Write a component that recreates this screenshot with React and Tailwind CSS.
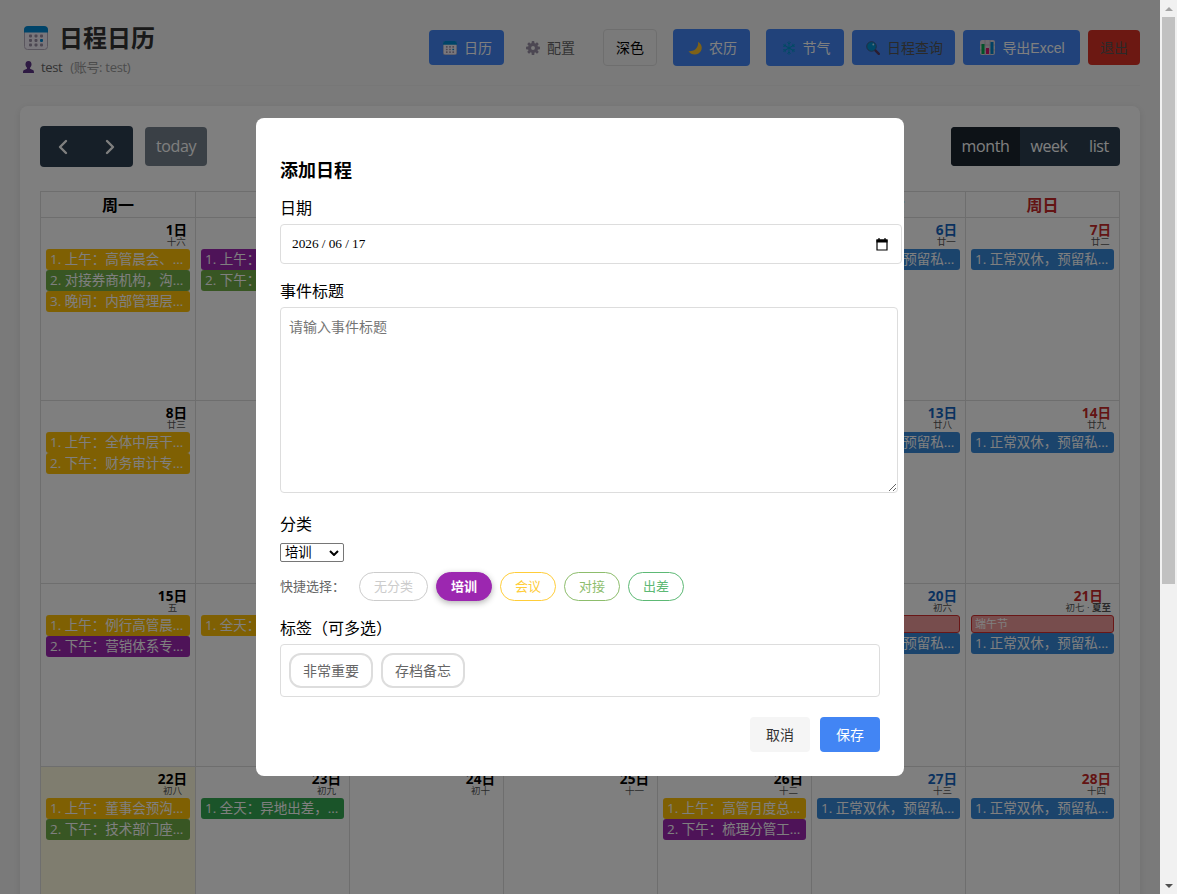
import { useState } from "react";
import { ChevronLeft, ChevronRight } from "lucide-react";

const eventColors = {
  amber: "bg-[#ffc107]",
  olive: "bg-[#70ad47]",
  green: "bg-[#34a853]",
  purple: "bg-[#9c27b0]",
  blue: "bg-[#3788d8]",
};

const restDay = { color: "blue", text: "1. 正常双休，预留私..." };

const weekDays = ["周一", "周二", "周三", "周四", "周五", "周六", "周日"];

const weeks = [
  [
    {
      day: 1,
      lunar: "十六",
      events: [
        { color: "amber", text: "1. 上午：高管晨会、..." },
        { color: "olive", text: "2. 对接券商机构，沟..." },
        { color: "amber", text: "3. 晚间：内部管理层..." },
      ],
    },
    {
      day: 2,
      lunar: "十七",
      events: [
        { color: "purple", text: "1. 上午：" },
        { color: "olive", text: "2. 下午：" },
      ],
    },
    { day: 3, lunar: "十八" },
    { day: 4, lunar: "十九" },
    { day: 5, lunar: "二十" },
    { day: 6, lunar: "廿一", events: [restDay] },
    { day: 7, lunar: "廿二", events: [restDay] },
  ],
  [
    {
      day: 8,
      lunar: "廿三",
      events: [
        { color: "amber", text: "1. 上午：全体中层干..." },
        { color: "amber", text: "2. 下午：财务审计专..." },
      ],
    },
    { day: 9, lunar: "廿四" },
    { day: 10, lunar: "廿五" },
    { day: 11, lunar: "廿六" },
    { day: 12, lunar: "廿七" },
    { day: 13, lunar: "廿八", events: [restDay] },
    { day: 14, lunar: "廿九", events: [restDay] },
  ],
  [
    {
      day: 15,
      lunar: "五",
      events: [
        { color: "amber", text: "1. 上午：例行高管晨..." },
        { color: "purple", text: "2. 下午：营销体系专..." },
      ],
    },
    { day: 16, lunar: "初二", events: [{ color: "amber", text: "1. 全天：" }] },
    { day: 17, lunar: "初三" },
    { day: 18, lunar: "初四" },
    { day: 19, lunar: "初五" },
    { day: 20, lunar: "初六", holiday: "端午节", events: [restDay] },
    { day: 21, lunar: "初七", term: "夏至", holiday: "端午节", events: [restDay] },
  ],
  [
    {
      day: 22,
      lunar: "初八",
      today: true,
      events: [
        { color: "amber", text: "1. 上午：董事会预沟..." },
        { color: "olive", text: "2. 下午：技术部门座..." },
      ],
    },
    { day: 23, lunar: "初九", events: [{ color: "green", text: "1. 全天：异地出差，..." }] },
    { day: 24, lunar: "初十" },
    { day: 25, lunar: "十一" },
    {
      day: 26,
      lunar: "十二",
      events: [
        { color: "amber", text: "1. 上午：高管月度总..." },
        { color: "purple", text: "2. 下午：梳理分管工..." },
      ],
    },
    { day: 27, lunar: "十三", events: [restDay] },
    { day: 28, lunar: "十四", events: [restDay] },
  ],
];

const categories = [
  { name: "无分类", idle: "w-[69px] border-[#ccc] text-[#ccc]" },
  { name: "培训", idle: "w-14 border-[#9c27b0] text-[#9c27b0]" },
  { name: "会议", idle: "w-14 border-[#ffcd39] text-[#ffcd39]" },
  { name: "对接", idle: "w-14 border-[#8dbd6c] text-[#8dbd6c]" },
  { name: "出差", idle: "w-14 border-[#5db975] text-[#5db975]" },
];

function CalendarIcon({ className }) {
  return (
    <svg viewBox="0 0 24 24" className={className}>
      <rect x="0.5" y="1" width="23" height="22.5" rx="3" fill="#f3eef8" stroke="#b4acbc" />
      <path d="M0 6.5V4a4 4 0 0 1 4-4h16a4 4 0 0 1 4 4v2.5z" fill="#0088d2" />
      {[10, 14.5, 19].map((y) =>
        [6.5, 12, 17.5].map((x) => (
          <rect
            key={`${x}-${y}`}
            x={x - 1.5}
            y={y - 1.4}
            width="3"
            height="2.8"
            rx="0.8"
            fill={x === 17.5 && y === 14.5 ? "#0088d2" : "#998ea4"}
          />
        ))
      )}
    </svg>
  );
}

function PersonIcon() {
  return (
    <svg viewBox="0 0 12 13" className="h-3 w-[11px]">
      <path
        d="M6 0C3.6 0 2.6 1.8 2.7 3.8c.1 1.5.7 2.7 1.6 3.5v1.2L1.2 9.8C.3 10.2 0 11 0 13h12c0-2-.3-2.8-1.2-3.2L7.7 8.5V7.3c.9-.8 1.500-2 1.600-3.500C9.400 1.800 8.400 0 6 0z"
        fill="#5c3486"
      />
    </svg>
  );
}

function GearIcon() {
  return (
    <svg viewBox="0 0 16 16" className="h-3.5 w-3.5">
      <g fill="#998fa5">
        {[0, 45, 90, 135].map((angle) => (
          <rect key={angle} x="6.4" y="0" width="3.2" height="16" rx="1" transform={`rotate(${angle} 8 8)`} />
        ))}
        <circle cx="8" cy="8" r="5.8" />
      </g>
      <circle cx="8" cy="8" r="2.2" fill="#f5f5f5" />
    </svg>
  );
}

function MoonIcon() {
  return (
    <svg viewBox="0 0 14 14" className="h-3.5 w-3.5">
      <path d="M10 .8a8 8 0 0 1-9.500 9.200c2 3.500 6.500 4.700 10 2.500 4.200-2.700 4.600-8.700-.5-11.700z" fill="#fcc32e" />
    </svg>
  );
}

function SnowIcon() {
  return (
    <svg viewBox="0 0 14 14" className="h-3.5 w-3.5" fill="none" stroke="#0094c8" strokeWidth="0.9">
      {[0, 60, 120, 180, 240, 300].map((angle) => (
        <path key={angle} d="M7 7V.3M5.300 1.400l1.700 1.500 1.700-1.500" transform={`rotate(${angle} 7 7)`} />
      ))}
    </svg>
  );
}

function SearchIcon() {
  return (
    <svg viewBox="0 0 14 14" className="h-3.5 w-3.5">
      <path d="M9.300 9.300l3.500 3.500" stroke="#553b62" strokeWidth="2.400" strokeLinecap="round" />
      <circle cx="5.500" cy="5.500" r="4.800" fill="#0090d0" stroke="#46557c" strokeWidth="0.900" />
      <circle cx="7.300" cy="3.500" r="0.900" fill="#b8e4f8" />
    </svg>
  );
}

function ChartIcon() {
  return (
    <svg viewBox="0 0 15 15" className="h-[15px] w-[15px]">
      <rect width="15" height="15" rx="2" fill="#d9d3df" />
      <path d="M0 5h15M0 10h15M5 0v15M10 0v15" stroke="#aaa2b4" strokeWidth="0.600" />
      <rect x="1.500" y="4" width="3" height="10" fill="#00a651" />
      <rect x="6" y="8" width="3" height="6" fill="#d4146e" />
      <rect x="10.500" y="2" width="3" height="12" fill="#0083c8" />
    </svg>
  );
}

function HeaderButton({ icon, className, children }) {
  return (
    <button
      className={`flex h-[35px] shrink-0 items-center justify-center gap-[7px] rounded text-sm leading-none ${className}`}
    >
      {icon}
      <span>{children}</span>
    </button>
  );
}

function Header() {
  return (
    <header className="flex h-[66px] justify-between border-b border-[#eee]">
      <div>
        <h1 className="mt-[3px] flex h-[30px] items-center gap-[11px] pl-1 text-2xl font-bold leading-none text-[#333]">
          <CalendarIcon className="h-6 w-6" />
          日程日历
        </h1>
        <div className="mt-1 flex h-5 items-center pl-[3px] text-[13px] leading-5 text-[#666]">
          <PersonIcon />
          <span className="ml-[7px] tracking-[-0.4px]">test</span>
          <span className="ml-2 tracking-[-0.3px] text-[#999]">(账号: test)</span>
        </div>
      </div>
      <nav className="mt-[9px] flex h-[37px] items-center font-['Liberation_Sans','Noto_Sans_CJK_SC',sans-serif]">
        <HeaderButton icon={<CalendarIcon className="h-3.5 w-3.5" />} className="w-[75px] bg-[#4285f4] pl-[2px] text-white">
          日历
        </HeaderButton>
        <HeaderButton icon={<GearIcon />} className="ml-2 w-[79px] pr-[2px] text-[#666]">
          配置
        </HeaderButton>
        <HeaderButton className="ml-3 h-[37px] w-[54px] border border-[#ddd] text-black">深色</HeaderButton>
        <HeaderButton icon={<MoonIcon />} className="ml-4 h-[37px] w-[77px] bg-[#4285f4] pl-[2px] text-white">
          农历
        </HeaderButton>
        <HeaderButton icon={<SnowIcon />} className="ml-4 h-[37px] w-[78px] bg-[#4285f4] pl-[2px] text-white">
          节气
        </HeaderButton>
        <HeaderButton icon={<SearchIcon />} className="ml-2 w-[103px] bg-[#4285f4] pl-[2px] text-[#555]">
          日程查询
        </HeaderButton>
        <HeaderButton icon={<ChartIcon />} className="ml-2 w-[117px] bg-[#4285f4] pl-[2px] text-white">
          导出Excel
        </HeaderButton>
        <HeaderButton className="ml-2 w-[52px] bg-[#d93025] text-[#555]">退出</HeaderButton>
      </nav>
    </header>
  );
}

function Toolbar() {
  return (
    <div className="flex h-[41px] items-center justify-between text-base tracking-[-0.4px] text-white">
      <div className="flex items-center gap-3">
        <div className="flex h-[41px] w-[93px] items-center rounded bg-[#2c3e50]">
          <button className="flex flex-1 justify-center">
            <ChevronLeft className="h-6 w-6" strokeWidth={2.4} />
          </button>
          <button className="flex flex-1 justify-center">
            <ChevronRight className="h-6 w-6" strokeWidth={2.4} />
          </button>
        </div>
        <button className="h-[39px] w-[62px] rounded bg-[#2c3e50] pb-px opacity-65">today</button>
      </div>
      <div className="flex h-[39px] overflow-hidden rounded bg-[#2c3e50]">
        <button className="w-[69px] bg-[#1a252f] pb-px">month</button>
        <button className="w-[58px] pb-px">week</button>
        <button className="w-[42px] pb-px">list</button>
      </div>
    </div>
  );
}

function dayColor(index) {
  if (index === 5) return "text-[#1565c0]";
  if (index === 6) return "text-[#c62828]";
  return "text-black";
}

function DayCell({ cell, index }) {
  return (
    <div className={`h-[183px] border-r border-b border-[#ddd] px-[5px] ${cell.today ? "bg-[#fffadf]" : ""}`}>
      <div className="flex h-[31px] justify-end pr-[3px]">
        <div className="flex flex-col items-center">
          <div className={`mt-[3px] h-[17px] text-[13.6px] font-bold leading-[18px] ${dayColor(index)}`}>{cell.day}日</div>
          <div className="h-2.5 text-[9.5px] leading-[8px] text-[#555]">
            {cell.lunar}
            {cell.term && (
              <>
                {" · "}
                <b>{cell.term}</b>
              </>
            )}
          </div>
        </div>
      </div>
      {cell.holiday && (
        <div className="h-[18px] rounded-[3px] border border-[#d32f2f] bg-[#ef9a9a] px-[3px] text-[11px] leading-4 text-white">
          {cell.holiday}
        </div>
      )}
      {(cell.events || []).map((event) => (
        <div
          key={event.text}
          className={`h-[21px] overflow-hidden whitespace-nowrap rounded-[3px] pl-1 text-[13.5px] leading-[21px] text-white ${eventColors[event.color]}`}
        >
          {event.text}
        </div>
      ))}
    </div>
  );
}

function MonthGrid() {
  return (
    <div className="mt-6 grid grid-cols-[155px_repeat(6,154px)] border-t border-l border-[#ddd]">
      {weekDays.map((name, index) => (
        <div
          key={name}
          className={`h-[26px] border-r border-b border-[#ddd] text-center text-base font-bold leading-[26px] ${
            index === 6 ? "text-[#c62828]" : "text-black"
          }`}
        >
          {name}
        </div>
      ))}
      {weeks.map((week) => week.map((cell, index) => <DayCell key={cell.day} cell={cell} index={index} />))}
    </div>
  );
}

function EventDialog() {
  const [category, setCategory] = useState("培训");
  const [title, setTitle] = useState("");

  return (
    <div className="h-[658px] w-[648px] rounded-lg bg-white px-6 pt-10 text-black">
      <h3 className="h-6 text-lg font-bold leading-6">添加日程</h3>

      <div className="mt-[14px] h-6 text-base leading-6">日期</div>
      <div className="mt-1 flex h-10 w-[622px] items-center justify-between rounded border border-[#ddd] pl-[11px] pr-[13px] font-['Liberation_Serif',serif] text-[13.33px]">
        <div className="flex">
          <span>2026</span>
          <span className="w-[10px] text-center">/</span>
          <span>06</span>
          <span className="w-[10px] text-center">/</span>
          <span>17</span>
        </div>
        <svg viewBox="0 0 12 13" className="h-[13px] w-3">
          <path d="M1 2h10v10H1zM3 0v2M9 0v2" fill="none" stroke="#000" strokeWidth="1.200" />
          <path d="M.5 1.500h11v3H.5z" fill="#000" />
        </svg>
      </div>

      <div className="mt-[15px] h-6 text-base leading-6">事件标题</div>
      <textarea
        value={title}
        onChange={(e) => setTitle(e.target.value)}
        placeholder="请输入事件标题"
        className="mt-1 block h-[186px] w-[618px] resize rounded border border-[#ddd] p-2 text-sm leading-[22px] placeholder:text-[#757575]"
      />

      <div className="mt-[19px] h-6 text-base leading-6">分类</div>
      <div className="mt-[7px] flex h-[19px] w-16 items-center justify-between rounded-[2px] border border-[#767676] pl-1 pr-1 text-[13.33px] leading-none">
        {category}
        <svg viewBox="0 0 10 6" className="h-1.5 w-2.5" fill="none" stroke="#000" strokeWidth="2">
          <path d="M1 1l4 4 4-4" />
        </svg>
      </div>

      <div className="mt-2.5 flex h-[29px] items-center gap-2 text-[13px]">
        <span className="w-[71px] text-[#666]">快捷选择：</span>
        {categories.map((item) => (
          <button
            key={item.name}
            onClick={() => setCategory(item.name)}
            className={`h-[29px] rounded-full border leading-none ${
              item.name === category
                ? "w-14 border-[#9c27b0] bg-[#9c27b0] font-bold text-white shadow-[0_2px_6px_rgba(0,0,0,0.3)]"
                : item.idle
            }`}
          >
            {item.name}
          </button>
        ))}
      </div>

      <div className="mt-[15px] h-6 text-base leading-6">标签（可多选）</div>
      <div className="mt-1 flex h-[53px] gap-2 rounded border border-[#ddd] p-2 text-sm text-[#666]">
        <button className="h-[35px] w-[84px] rounded-xl border-2 border-[#ddd] leading-none">非常重要</button>
        <button className="h-[35px] w-[84px] rounded-xl border-2 border-[#ddd] leading-none">存档备忘</button>
      </div>

      <div className="mt-5 flex justify-end gap-2.5 text-sm">
        <button className="h-[35px] w-[60px] rounded bg-[#f5f5f5] text-[#333]">取消</button>
        <button className="h-[35px] w-[60px] rounded bg-[#4285f4] text-white">保存</button>
      </div>
    </div>
  );
}

function Scrollbar() {
  return (
    <div className="flex h-full w-[17px] flex-col items-center bg-[#f1f1f1]">
      <div className="flex h-[17px] items-center">
        <svg viewBox="0 0 8 4" className="mt-px h-1 w-2">
          <path d="M0 4l4-4 4 4z" fill="#a3a3a3" />
        </svg>
      </div>
      <div className="h-[567px] w-[13px] bg-[#c1c1c1]" />
      <div className="mt-auto flex h-[17px] items-center">
        <svg viewBox="0 0 8 4" className="h-1 w-2">
          <path d="M0 0l4 4 4-4z" fill="#505050" />
        </svg>
      </div>
    </div>
  );
}

export default function App() {
  return (
    <div className="flex h-[894px] w-[1177px] overflow-hidden bg-[#f5f5f5] font-['Open_Sans','Noto_Sans_CJK_SC',sans-serif]">
      <div className="relative h-full w-[1160px] overflow-hidden">
        <div className="px-5 pt-5">
          <Header />
          <main className="mt-5 h-[900px] rounded-lg bg-white p-5 shadow-[0_2px_8px_rgba(0,0,0,0.1)]">
            <Toolbar />
            <MonthGrid />
          </main>
        </div>
        {/* Modal overlay */}
        <div className="absolute inset-0 z-10 flex items-center justify-center bg-black/50">
          <EventDialog />
        </div>
      </div>
      <Scrollbar />
    </div>
  );
}
